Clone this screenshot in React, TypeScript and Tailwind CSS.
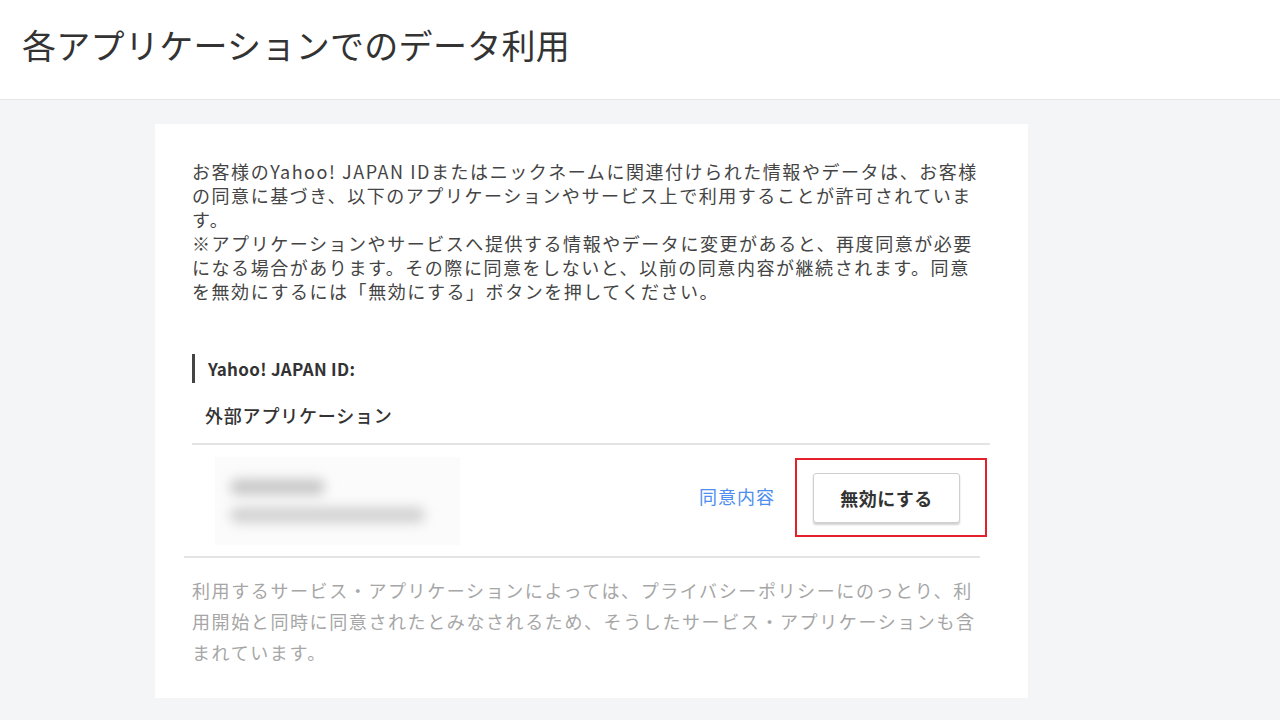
import React from 'react';

const jp = { fontFamily: '"Noto Sans CJK JP", "Noto Sans", sans-serif' };

function Header() {
  return (
    <header className="h-[100px] bg-white border-b border-[#e6e7ea] flex items-center pl-[22px]">
      <h1 className="text-[34px] leading-none text-[#333] tracking-[0.3px] font-normal -mt-[10px]">
        各アプリケーションでのデータ利用
      </h1>
    </header>
  );
}

function AppRow() {
  return (
    <div className="h-[113px] flex items-center border-t-2 border-[#e4e4e4]">
      <div className="ml-[23px] w-[245px] h-[88px] bg-[#fbfbfb] flex flex-col justify-center gap-[12px] pl-[15px]">
        <div className="w-[95px] h-[16px] bg-[#c8c8c8] rounded-full blur-[6px]" />
        <div className="w-[195px] h-[16px] bg-[#d2d2d2] rounded-full blur-[6px]" />
      </div>
      <a className="ml-auto mb-[8px] text-[18px] text-[#4d8ef0] tracking-[1px]">同意内容</a>
      <div className="ml-[20px] mr-[3px] mb-[6px] border-2 border-[#e3202c] pl-[16px] pr-[25px] pt-[13px] pb-[12px]">
        <button className="w-[147px] h-[50px] bg-white border border-[#cfcfcf] rounded-[3px] shadow-[0_2px_2px_rgba(0,0,0,0.18)] text-[18px] font-bold text-[#333] tracking-[0.5px]">
          無効にする
        </button>
      </div>
    </div>
  );
}

export default function App() {
  return (
    <div className="min-h-[720px] bg-[#f4f5f7]" style={jp}>
      <Header />
      <div className="pt-[24px]">
        <div className="ml-[155px] w-[873px] bg-white pt-[35px] pb-[30px] pl-[37px] pr-[38px]">
          <p className="text-[18px] leading-[24px] text-[#444] tracking-[1.55px] whitespace-nowrap">
            お客様のYahoo! JAPAN IDまたはニックネームに関連付けられた情報やデータは、お客様
            <br />
            の同意に基づき、以下のアプリケーションやサービス上で利用することが許可されていま
            <br />
            す。
            <br />
            ※アプリケーションやサービスへ提供する情報やデータに変更があると、再度同意が必要
            <br />
            になる場合があります。その際に同意をしないと、以前の同意内容が継続されます。同意
            <br />
            を無効にするには「無効にする」ボタンを押してください。
          </p>

          <div className="mt-[51px] border-l-[3px] border-[#444] h-[29px] flex items-center pl-[13px]">
            <span className="text-[17px] font-bold text-[#333] tracking-[0.3px]">Yahoo! JAPAN ID:</span>
          </div>
          <div className="h-[60px] flex items-center pl-[13px] pt-[4px]">
            <span className="text-[18px] font-medium text-[#333] tracking-[0.8px]">外部アプリケーション</span>
          </div>

          <AppRow />
          <div className="-ml-[8px] w-[796px] h-[2px] bg-[#e4e4e4]" />

          <p className="mt-[17px] text-[18px] leading-[31px] text-[#a6a6a6] tracking-[1.6px] whitespace-nowrap">
            利用するサービス・アプリケーションによっては、プライバシーポリシーにのっとり、利
            <br />
            用開始と同時に同意されたとみなされるため、そうしたサービス・アプリケーションも含
            <br />
            まれています。
          </p>
        </div>
      </div>
    </div>
  );
}
